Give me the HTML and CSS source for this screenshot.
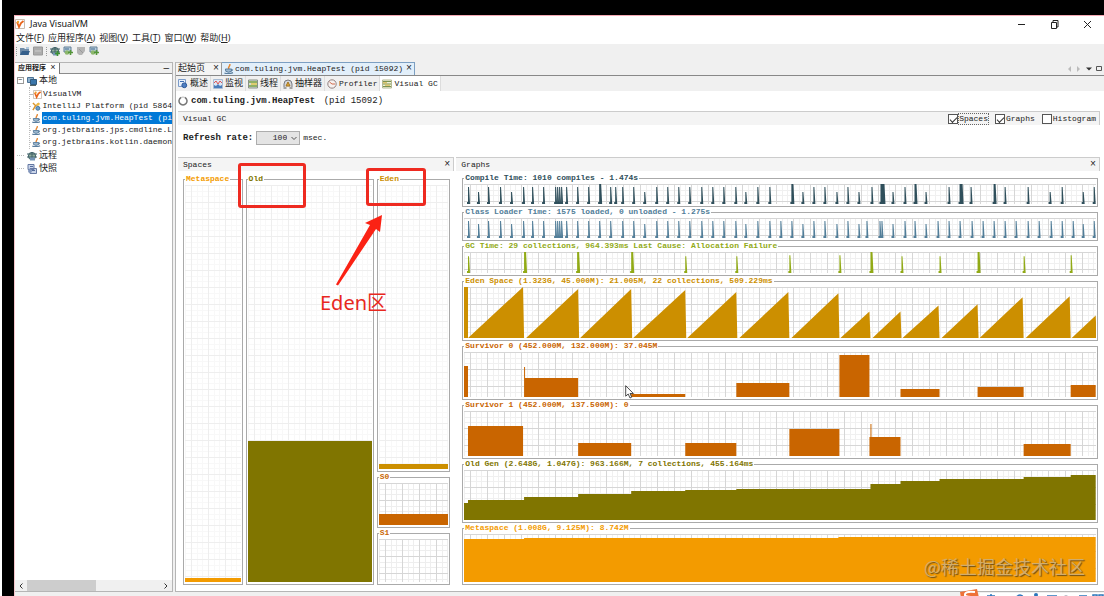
FILE: index.html
```html
<!DOCTYPE html>
<html lang="zh-CN">
<head>
<meta charset="utf-8">
<title>Java VisualVM</title>
<link rel="stylesheet" href="styles.css">
</head>
<body>
<svg class="defs" aria-hidden="true">
  <symbol id="java" viewBox="0 0 10 10"><path d="M5.6 0C7 2 3.2 3 5 5.2" stroke="#e5862f" stroke-width="1.5" fill="none"/><path d="M1.4 5h6v2.3q-3 2-5.6 0zM7.3 5.2q2.6.2.2 2" fill="#9db8ce" stroke="#597d9e"/><path d="M.4 9q4.2 1.4 8.6-.4" stroke="#597d9e" stroke-width="1.3" fill="none"/></symbol>
  <symbol id="vm" viewBox="0 0 10 10"><path d="M.5.5h9v9h-9z" fill="#fff" stroke="#c9bdb0"/><path d="M2 3l2 5 2-4 2.5-2" stroke="#e8641b" stroke-width="1.8" fill="none"/><circle cx="3" cy="3" r="1.2" fill="#f3a22c"/></symbol>
  <symbol id="idea" viewBox="0 0 10 10"><path d="M1 1l3 3-3 5M8 1L5 4" stroke="#d9942b" stroke-width="1.6" fill="none"/><circle cx="6.7" cy="2.6" r="1.6" fill="#f1bd45"/><circle cx="6.5" cy="7" r="2.2" fill="#6f9fc7" stroke="#40709c"/></symbol>
  <symbol id="host" viewBox="0 0 10 10"><path d="M.5 1.5h6v5h-6z" fill="#8fb2cf" stroke="#4c7295"/><path d="M3.5 3.5h6v5h-6z" fill="#3a76aa" stroke="#325a7c"/><path d="M3 9.5h6" stroke="#566"/></symbol>
  <symbol id="remote" viewBox="0 0 10 10"><circle cx="5" cy="5" r="3.6" fill="#90ad9c" stroke="#42636a"/><path d="M0 3h10M0 6h10M5 1v8" stroke="#42636a"/><path d="M3 6.5h5v3H3z" fill="#7594b5"/></symbol>
  <symbol id="snap" viewBox="0 0 10 10"><path d="M1 .5h6v5H1zM3 4.5h6.5v5H3z" fill="#cad5e9" stroke="#6578a3"/><path d="M3 2.5h3M5 6.5h3" stroke="#526a9b"/><circle cx="3" cy="7" r="2" fill="#8397bc"/></symbol>
  <symbol id="list" viewBox="0 0 10 10"><path d="M.5 1h9v8h-9z" fill="#eef2d8" stroke="#b4b994"/><path d="M1 2.5h8M1 5h8M1 7.5h8" stroke="#7b9352"/><path d="M1 3.8h4M3 6.2h5" stroke="#dab545"/></symbol>
  <symbol id="threads" viewBox="0 0 10 10"><path d="M.5 1h9v8h-9z" fill="#d5dbd5" stroke="#879187"/><path d="M1 3h8M1 7h8" stroke="#7aa343" stroke-width="1.5"/><path d="M3 5h6" stroke="#e2c84c" stroke-width="1.5"/></symbol>
  <symbol id="overview" viewBox="0 0 10 10"><path d="M.5.5h7v7h-7z" fill="#e9f1fb" stroke="#7b9bc9"/><path d="M2 2.5h4" stroke="#3e6fb2"/><circle cx="6.3" cy="6.3" r="2.4" fill="#4e7fc2" stroke="#2c5899"/></symbol>
  <symbol id="monitor" viewBox="0 0 10 10"><path d="M.5.5h9v9h-9z" fill="#dce7f4" stroke="#a9bcd4"/><path d="M1 4l2-2 2 3 2-3 2 2" stroke="#d55" fill="none"/><path d="M1 9V6l2 1 2-2 2 2 2-1v3z" fill="#4a7dbb"/></symbol>
  <symbol id="sampler" viewBox="0 0 10 10"><path d="M1 8V5a4 4 0 018 0v3" fill="#d5d6d9" stroke="#777b83"/><path d="M3 7l2-4 2 4z" fill="#e4ad33" stroke="#a17324"/><path d="M.5 9h3M6.5 9h3" stroke="#555"/></symbol>
  <symbol id="clock" viewBox="0 0 10 10"><circle cx="5" cy="5" r="4.2" fill="#f6f1ef" stroke="#918180"/><path d="M5 5L2.5 3M5 5h3" stroke="#d16b4d"/></symbol>
  <symbol id="add" viewBox="0 0 10 10"><path d="M1 1h7v5H1z" fill="#b6ccdd" stroke="#637e96"/><path d="M2 3h4" stroke="#42688b"/><circle cx="4" cy="6.5" r="2.3" fill="#8db76d"/><path d="M7.5 4v5M5 6.5h5" stroke="#55963a" stroke-width="1.6"/></symbol>
</svg>

<main class="window">
  <header class="titlebar">
    <svg class="icon"><use href="#vm"/></svg><h1>Java VisualVM</h1>
    <div class="controls">
      <button aria-label="最小化"><svg viewBox="0 0 9 9"><path d="M1 4.5h7"/></svg></button>
      <button aria-label="还原"><svg viewBox="0 0 9 9"><path d="M1.5 2.5h5v6h-5zM3 2V.5h5V7H7"/></svg></button>
      <button aria-label="关闭"><svg viewBox="0 0 9 9"><path d="M1 1l7 7M8 1L1 8"/></svg></button>
    </div>
  </header>
  <nav class="menubar">
    <button>文件(<u>F</u>)</button><button>应用程序(<u>A</u>)</button><button>视图(<u>V</u>)</button><button>工具(<u>T</u>)</button><button>窗口(<u>W</u>)</button><button>帮助(<u>H</u>)</button>
  </nav>
  <div class="toolbar">
    <i></i>
    <button aria-label="打开"><svg class="icon" viewBox="0 0 10 10"><path d="M0 9V2h4l1 1h4v6z" fill="#6e8ba8"/><path d="M2 5h8L8 9H0z" fill="#355f8b"/><path d="M6 2h3" stroke="#70a2cd"/></svg></button>
    <button aria-label="保存"><svg class="icon" viewBox="0 0 10 10"><path d="M.5 1h9v8h-9z" fill="#adadad" stroke="#999"/><path d="M2 5h6" stroke="#ccc"/></svg></button>
    <i></i>
    <button aria-label="添加 JMX"><svg class="icon" viewBox="0 0 10 10"><use href="#remote"/><path d="M7.5 5v5M5 7.5h5" stroke="#3c9231" stroke-width="1.6"/></svg></button>
    <button aria-label="添加远程主机"><svg class="icon"><use href="#add"/></svg></button>
    <button aria-label="堆转储"><svg class="icon" viewBox="0 0 10 10"><path d="M1 1h8v4L6 9H3L1 7z" fill="#b5b5b5"/><path d="M3 3l4 4" stroke="#999"/></svg></button>
    <button aria-label="快照"><svg class="icon"><use href="#add"/></svg></button>
  </div>

  <div class="workspace">
    <aside class="dock">
      <div class="docktabs"><button class="docktab">应用程序 <span>×</span></button><button class="minimize" aria-label="最小化">–</button></div>
      <ul class="tree">
        <li><div class="root"><span class="twist">−</span><svg class="icon"><use href="#host"/></svg>本地</div>
          <ul>
            <li><svg class="icon"><use href="#vm"/></svg><span>VisualVM</span></li>
            <li><svg class="icon"><use href="#idea"/></svg><span>IntelliJ Platform (pid 5864</span></li>
            <li><svg class="icon"><use href="#java"/></svg><span class="selected">com.tuling.jvm.HeapTest (pi</span></li>
            <li><svg class="icon"><use href="#java"/></svg><span>org.jetbrains.jps.cmdline.L</span></li>
            <li><svg class="icon"><use href="#java"/></svg><span>org.jetbrains.kotlin.daemon</span></li>
          </ul>
        </li>
        <li><div class="root"><span class="stem"></span><svg class="icon"><use href="#remote"/></svg>远程</div></li>
        <li><div class="root"><span class="stem"></span><svg class="icon"><use href="#snap"/></svg>快照</div></li>
      </ul>
      <div class="scroll"><button aria-label="向左"><svg viewBox="0 0 6 6"><path d="M4.5.5L2 3l2.500 2.500"/></svg></button><div class="track"><div class="thumb"></div></div><button aria-label="向右"><svg viewBox="0 0 6 6"><path d="M1.500.5L4 3 1.500 5.500"/></svg></button></div>
    </aside>

    <section class="editor">
      <div class="filetabs">
        <button class="filetab"><b>起始页</b><span class="x">×</span></button>
        <button class="filetab active"><svg class="icon"><use href="#java"/></svg>com.tuling.jvm.HeapTest (pid 15092)<span class="x">×</span></button>
        <svg class="tabnav" viewBox="0 0 38 8"><path d="M5 1v6L2 4z" fill="#bbb"/><path d="M11 1v6l3-3z" fill="#bbb"/><path d="M20 2.500h6l-3 3z" fill="#333"/><path d="M30.500 1.500h5v4h-5z" fill="none" stroke="#555"/></svg>
      </div>
      <div class="viewtabs">
        <button><svg class="icon"><use href="#overview"/></svg>概述</button>
        <button><svg class="icon"><use href="#monitor"/></svg>监视</button>
        <button><svg class="icon"><use href="#threads"/></svg>线程</button>
        <button><svg class="icon"><use href="#sampler"/></svg>抽样器</button>
        <button class="latin"><svg class="icon"><use href="#clock"/></svg>Profiler</button>
        <button class="latin active"><svg class="icon"><use href="#list"/></svg>Visual GC</button>
      </div>
      <div class="content">
        <h2><svg class="icon" viewBox="0 0 10 10"><path d="M3 1.500a4 4 0 104 0" fill="none" stroke="#777" stroke-width="1.500"/><path d="M3 1.500q2-1 4 0" fill="none" stroke="#bbb"/></svg>com.tuling.jvm.HeapTest <span>(pid 15092)</span></h2>
        <div class="bar">
          <span>Visual GC</span>
          <div class="checks">
            <label><input type="checkbox" checked><span class="focused">Spaces</span></label>
            <label><input type="checkbox" checked><span>Graphs</span></label>
            <label><input type="checkbox"><span>Histogram</span></label>
          </div>
        </div>
        <div class="refresh"><label for="rate">Refresh rate:</label><div class="rate"><select id="rate"><option>100</option></select><svg viewBox="0 0 8 8"><path d="M1.500 3L4 5.500 6.500 3"/></svg></div><span>msec.</span></div>
        <div class="panels">
          <section class="panel">
            <div class="bar"><span>Spaces</span><button aria-label="关闭 Spaces">×</button></div>
            <div class="spaces">
              <fieldset class="meta"><legend>Metaspace</legend><div class="grid"><div class="fill" style="height:1%"></div></div></fieldset>
              <fieldset class="old"><legend>Old</legend><div class="grid"><div class="fill" style="height:35.500%"></div></div></fieldset>
              <div class="young">
                <fieldset class="eden"><legend>Eden</legend><div class="grid"><div class="fill" style="height:2%"></div></div></fieldset>
                <fieldset class="surv clear"><legend>S0</legend><div class="grid"><div class="fill" style="height:28%"></div></div></fieldset>
                <fieldset class="surv clear"><legend>S1</legend><div class="grid"></div></fieldset>
              </div>
            </div>
          </section>
          <section class="panel">
            <div class="bar"><span>Graphs</span><button aria-label="关闭 Graphs">×</button></div>
            <div class="graphs">
              <fieldset class="compile"><legend>Compile Time: 1010 compiles - 1.474s</legend><svg id="g-compile" viewBox="0 0 631 20" preserveAspectRatio="none"></svg></fieldset>
              <fieldset class="loader"><legend>Class Loader Time: 1575 loaded, 0 unloaded - 1.275s</legend><svg id="g-loader" viewBox="0 0 631 20" preserveAspectRatio="none"></svg></fieldset>
              <fieldset class="gc"><legend>GC Time: 29 collections, 964.393ms Last Cause: Allocation Failure</legend><svg id="g-gc" viewBox="0 0 631 20" preserveAspectRatio="none"></svg></fieldset>
              <fieldset class="eden"><legend>Eden Space (1.323G, 45.000M): 21.005M, 22 collections, 509.229ms</legend><svg id="g-eden" viewBox="0 0 631 50" preserveAspectRatio="none"></svg></fieldset>
              <fieldset class="surv"><legend>Survivor 0 (452.000M, 132.000M): 37.045M</legend><svg id="g-s0" viewBox="0 0 631 45" preserveAspectRatio="none"></svg></fieldset>
              <fieldset class="surv"><legend>Survivor 1 (452.000M, 137.500M): 0</legend><svg id="g-s1" viewBox="0 0 631 45" preserveAspectRatio="none"></svg></fieldset>
              <fieldset class="old"><legend>Old Gen (2.648G, 1.047G): 963.166M, 7 collections, 455.164ms</legend><svg id="g-old" viewBox="0 0 631 50" preserveAspectRatio="none"></svg></fieldset>
              <fieldset class="meta"><legend>Metaspace (1.008G, 9.125M): 8.742M</legend><svg id="g-meta" viewBox="0 0 631 48" preserveAspectRatio="none"></svg></fieldset>
            </div>
          </section>
        </div>
      </div>
    </section>
  </div>
  <footer class="status"></footer>
</main>

<div class="mark mark-old"></div>
<div class="mark mark-eden"></div>
<svg class="arrow" viewBox="0 0 50 72"><path d="M49 0L47 17l-4-3L5 70.500l-2-1L37 10l-5-2z" fill="#fb2214"/></svg>
<div class="note">Eden区</div>
<svg class="cursor" viewBox="0 0 9 14"><path d="M.7.7v10.500l2.500-2.200L5 13l1.700-.8L5 8.500h3.400z" fill="#fff" stroke="#222" stroke-width=".8"/></svg>
<div class="watermark">@稀土掘金技术社区</div>
<svg class="ime" viewBox="0 0 144 9"><path d="M20 4h124v5H18z" fill="#fff"/><path d="M0 3L17 0l2 9H1z" fill="#ee7138"/><path d="M15 3Q6 2 5 5t6 3" stroke="#fff" stroke-width="2" fill="none"/><path d="M27 7h8M31 5v4M56 9q4-6 8 0M87 7h10M119 7h8M133 6h4v3h-4zM139 6h4v3h-4z" stroke="#2a75bb" stroke-width="1.500" fill="none"/><circle cx="76" cy="6" r="2" fill="#2a75bb"/><path d="M73 9q3-3 6 0M42 9l2-2" stroke="#2a75bb"/><circle cx="106" cy="8" r="2" fill="#b7b7c4"/></svg>
<script src="charts.js"></script>
</body>
</html>
```
FILE: styles.css
```css
* { box-sizing: border-box; }
body {
  margin: 0; min-height: 100vh; display: flex; position: relative; overflow: hidden;
  padding: 15px 0 0 12px; border-left: 2px solid #fff; background: #000;
  font: 8px/10px "Liberation Mono", "Noto Sans CJK SC", monospace; color: #222;
}
button, select, input { font: inherit; color: inherit; margin: 0; padding: 0; border: 0; background: none; }
button { white-space: nowrap; }
ul { list-style: none; margin: 0; padding: 0; }
.defs { position: absolute; width: 0; height: 0; }
.icon { width: 10px; height: 10px; flex: none; }
.window { flex: 1; min-width: 0; display: flex; flex-direction: column; background: #f0f0f0; border-left: 1px solid #f5c6cb; border-top: 1px solid #f5a9b4; }

.titlebar { height: 16px; display: flex; align-items: center; gap: 5px; background: #fff; }
.titlebar h1 { margin: 0; font: 9px/14px "Noto Sans", sans-serif; color: #111; }
.controls { margin-left: auto; display: flex; gap: 24px; padding-right: 12px; }
.controls svg { display: block; width: 9px; height: 9px; fill: none; stroke: #222; }
.menubar { height: 12px; display: flex; gap: 4px; padding-left: 1px; background: #fff; font: 9px/12px "Noto Sans", "Noto Sans CJK SC", sans-serif; }
.toolbar { height: 18px; display: flex; align-items: center; gap: 3px; padding: 0 1px 4px; }
.toolbar i { height: 9px; border-left: 1px dotted #999; }
.toolbar button, .toolbar svg { display: block; }

.workspace { flex: 1; min-height: 0; display: flex; gap: 2px; }
.dock { width: 158px; flex: none; display: flex; flex-direction: column; background: #fff; border: 1px solid #b5b5b5; border-width: 1px 1px 1px 0; }
.docktabs { height: 11px; display: flex; justify-content: space-between; background: #f0f0f0; border-bottom: 1px solid #8c8c8c; }
.docktab { height: 11px; padding: 0 3px; background: #fff; border-right: 1px solid #777; font-weight: bold; font-size: 7px; line-height: 9px; }
.docktab span { font-size: 9px; font-weight: normal; }
.minimize { padding-right: 3px; font: 10px/8px "Liberation Sans", sans-serif; }
.tree { flex: 1; padding-left: 2px; white-space: nowrap; }
.root { height: 13px; display: flex; align-items: center; gap: 2px; font-size: 9px; }
.root .icon { margin-left: 1px; }
.twist { width: 7px; height: 7px; border: 1px solid #999; font-size: 7px; line-height: 5px; }
.stem { width: 7px; border-bottom: 1px dotted #bbb; }
.tree ul { margin-left: 12px; padding: 1px 0; border-left: 1px dotted #bbb; }
.tree ul li { height: 12px; display: flex; align-items: center; gap: 1px; }
.tree ul li::before { content: ""; width: 2px; border-bottom: 1px dotted #bbb; }
.tree ul .icon { width: 9px; height: 9px; }
.tree .selected { flex: 1; padding: 1px 0; background: #0078d7; color: #fff; }
.scroll { height: 11px; display: flex; align-items: center; background: #f0f0f0; }
.scroll button { width: 12px; display: grid; place-items: center; }
.scroll button svg { width: 6px; height: 6px; fill: none; stroke: #333; }
.track { flex: 1; height: 100%; }
.thumb { width: 52%; height: 100%; background: #cdcdcd; }

.editor { flex: 1; min-width: 0; display: flex; flex-direction: column; border-left: 1px solid #b5b5b5; border-bottom: 1px solid #b5b5b5; }
.filetabs { height: 14px; display: flex; border-bottom: 1px solid #888; }
.filetab { display: flex; align-items: center; gap: 2px; padding: 0 2px; border-right: 1px solid #999; border-top: 1px solid #bbb; background: #f4f4f4; }
.filetab b { font-size: 9px; font-weight: normal; }
.filetab .x { margin-left: 6px; font-size: 10px; }
.filetab.active { gap: 1px; background: #e2effa; border-color: #7c9fc2; }
.filetab.active .x { margin-left: 2px; }
.tabnav { width: 38px; height: 8px; margin-left: auto; align-self: center; }
.viewtabs { height: 15px; display: flex; }
.viewtabs button { display: flex; align-items: center; gap: 2px; padding: 0 2px; border-right: 1px solid #ddd; font-size: 9px; }
.viewtabs .latin { font-size: 8px; }
.viewtabs .active { background: #fff; }
.content { flex: 1; min-height: 0; display: flex; flex-direction: column; background: #fff; padding: 0 4px 0 2px; }
h2 { height: 20px; margin: 0; display: flex; align-items: center; gap: 3px; font-size: 9px; white-space: pre; }
h2 span { font-weight: normal; }
.bar { height: 14px; display: flex; align-items: center; justify-content: space-between; padding: 0 3px 0 5px; background: #f4f4f4; border-top: 1px solid #ccc; border-right: 1px solid #ccc; }
.checks { display: flex; gap: 7px; }
.checks label { display: flex; align-items: center; gap: 1px; }
.checks input { appearance: none; width: 10px; height: 10px; border: 1px solid #555; background: #fff; }
.checks input:checked::after { content: ""; display: block; width: 6px; height: 3px; margin: 2px 1px; border: solid #333; border-width: 0 0 1px 1px; transform: rotate(-45deg); }
.focused { outline: 1px dotted #666; }
.refresh { height: 32px; display: flex; align-items: center; gap: 3px; padding: 0 0 6px 5px; }
.refresh label { font-weight: bold; font-size: 9px; }
.rate { position: relative; }
.rate select { appearance: none; width: 44px; height: 14px; padding-right: 12px; background: #e4e4e4; border: 1px solid #adadad; text-align: right; }
.rate svg { position: absolute; right: 2px; top: 3px; width: 8px; height: 8px; fill: none; stroke: #555; pointer-events: none; }

.panels { flex: 1; min-height: 0; display: grid; grid-template-columns: 276fr 643fr; gap: 2px; }
.panel { min-width: 0; min-height: 0; display: flex; flex-direction: column; }
.panel .bar button { font-size: 10px; }
.spaces { flex: 1; min-height: 0; display: grid; grid-template-columns: 60fr 129fr 74fr; gap: 3px; padding: 3px 4px 6px 5px; }
.young { display: grid; grid-template-rows: 298fr 56fr 57fr; min-height: 0; }
.graphs { flex: 1; min-height: 0; display: grid; grid-template-rows: 34fr 34fr 35fr 65fr 59fr 59fr 64fr 62fr; padding: 2px 2px 6px 6px; }
fieldset { min-width: 0; min-height: 0; margin: 0; padding: 1px 1px 2px; border: 1px solid #aaa; display: flex; }
legend { height: 10px; padding: 0 1px; font-weight: bold; white-space: nowrap; color: var(--ink); }
fieldset > svg { display: block; flex: 1; min-width: 0; width: 100%; height: 100%; }
fieldset > svg path { fill: var(--ink); }
.grid, fieldset > svg {
  --minor: #f0f0f0; --major: #d6d6d6;
  background:
    linear-gradient(to right, var(--major) 1px, transparent 1px) 6px 0 / 17px 17px,
    linear-gradient(var(--major) 1px, transparent 1px) 0 0 / 17px 17px,
    linear-gradient(to right, transparent 6px, var(--minor) 6px 7px, transparent 7px 11px, var(--minor) 11px 12px, transparent 12px) 6px 0 / 17px 17px,
    linear-gradient(transparent 6px, var(--minor) 6px 7px, transparent 7px 11px, var(--minor) 11px 12px, transparent 12px) 0 0 / 17px 17px;
}
.grid { flex: 1; display: flex; align-items: flex-end; --minor: #f8f8f8; --major: #eee; }
.clear .grid { --minor: #eee; --major: #d6d6d6; }
.fill { width: 100%; background: var(--ink); }
.compile { --ink: #2f4f5b; }
.loader { --ink: #527e99; }
.gc { --ink: #91aa16; }
.eden { --ink: #cc8f00; }
.surv { --ink: #c96500; }
.old { --ink: #807500; }
.meta { --ink: #f39b00; }
.status { height: 6px; }

.mark { position: absolute; border: 3px solid #ee2a20; border-radius: 3px; }
.mark-old { left: 236px; top: 163px; width: 68px; height: 45px; }
.mark-eden { left: 364px; top: 168px; width: 60px; height: 38px; }
.arrow { position: absolute; left: 331px; top: 215px; width: 50px; height: 72px; }
.note { position: absolute; left: 318px; top: 290px; font: 20px/26px "Noto Sans", "Noto Sans CJK SC", sans-serif; color: #e8281e; }
.cursor { position: absolute; left: 623px; top: 385px; width: 9px; height: 14px; }
.watermark { position: absolute; right: 19px; bottom: 18px; font: 18px/28px "Noto Sans CJK SC", sans-serif; color: #d2ad6c; text-shadow: 1px 1px 1px #6b4c17; }
.ime { position: absolute; right: 0; bottom: 0; width: 144px; height: 9px; }
```
FILE: charts.js
```js
const LEFT = 464;

function draw(id, d) {
  const path = document.createElementNS("http://www.w3.org/2000/svg", "path");
  path.setAttribute("d", d);
  document.getElementById(id).append(path);
}

// Spikes: [x, height, width]
function spikes(id, list) {
  draw(id, list.map(([x, h = 17, w = 1]) => {
    const c = x - LEFT;
    return `M${c - 1} 20V18H${c}V${20 - h}H${c + w}L${c + w + 1} 20Z`;
  }).join(""));
}

const shared = [468, 478, 488, 500, 511, 523, 532, 543, 555, 559, 566, 577, 588, 599, 610, 622, 633, 644, 656, 667, 678, 689, 701, 712, 723, 735, 745, 757, 769];
const tall = { 599: 2, 791: 2, 880: 4, 914: 2, 959: 3, 993: 2 };
const short = [478, 511, 644, 745, 802, 836, 858, 892, 925, 1049, 1082];
const size = x => [x, tall[x] ? 20 : short.includes(x) ? 12 : 17, tall[x] || 1];

spikes("g-compile", [...shared, 557, 561, 615, 791, 802, 813, 824, 836, 847, 858, 871, 880, 892, 904, 914, 925, 948, 959, 970, 993, 1004, 1027, 1049, 1061, 1082, 1093].map(size));
spikes("g-loader", [...shared, 557, 561, 780, 791, 802, 813, 824, 836, 847, 858, 866, 879, 881, 892, 904, 914, 925, 937, 948, 959, 971, 982, 993, 1004, 1015, 1027, 1038, 1050, 1061, 1072, 1082, 1093].map(x => [x, short.includes(x) ? 14 : 17, 1]));
spikes("g-gc", [[468, 16], [524, 20, 2], [577, 20, 2], [631, 20, 2], [685, 16], [736, 16], [789, 17], [839, 17], [870, 20, 2], [901, 16], [939, 16], [977, 20, 2], [1023, 16], [1070, 17]]);

// Sawtooth: [start, end, top]
const teeth = [[468, 523, 0], [526, 578, 2], [580, 631, 2], [633, 685, 3], [687, 736, 5], [739, 788, 5], [791, 838, 6], [840, 869, 24], [872, 900, 24], [902, 938, 18], [941, 977, 17], [979, 1022, 10], [1025, 1069, 9], [1071, 1095, 28]];
draw("g-eden", "M0 50V0H4V50Z" + teeth.map(([a, b, t]) => `M${a - LEFT} 50L${b - LEFT} ${t}L${b - LEFT + 1} 50Z`).join(""));

// Blocks: [start, end, top]
const blocks = (id, list) => draw(id, list.map(([a, b, t]) => `M${a - LEFT} 45V${t}H${b - LEFT}V45Z`).join(""));
blocks("g-s0", [[464, 468, 14], [524, 525, 15], [524, 578, 26], [631, 685, 42], [736, 789, 31], [839, 869, 3], [900, 939, 37], [977, 1023, 35], [1070, 1095, 33]]);
blocks("g-s1", [[468, 523, 15], [578, 631, 32], [685, 736, 32], [789, 839, 18], [870, 871, 13], [869, 900, 26], [1023, 1070, 33]]);

// Steps: [start, top], each held until the next
const steps = (id, list, bottom) => draw(id, `M0 ${bottom}` + list.map(([x, t]) => `H${x - LEFT}V${t}`).join("") + `H631V${bottom}Z`);
steps("g-old", [[464, 33], [468, 30], [524, 27], [578, 24], [631, 21], [685, 20], [736, 19], [870, 14], [900, 11], [939, 9], [1023, 7], [1070, 5]], 50);
steps("g-meta", [[464, 5], [524, 4], [838, 3]], 48);
```
